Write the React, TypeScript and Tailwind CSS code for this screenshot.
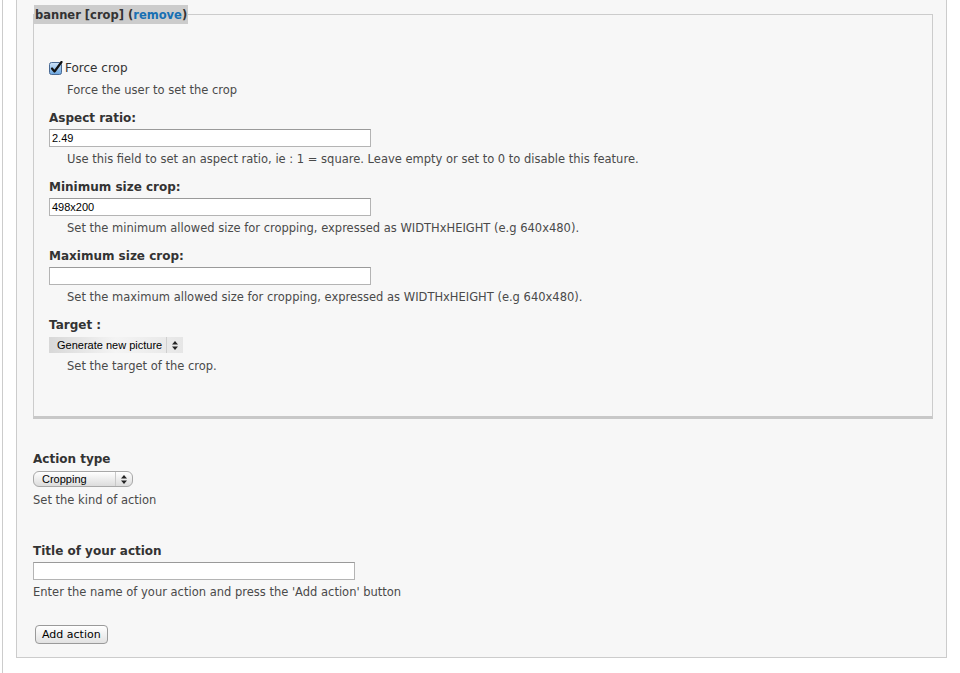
const font = "font-['DejaVu_Sans',_'Liberation_Sans',_sans-serif]";
const inputFont = "font-['Liberation_Sans',_Arial,_sans-serif]";

const Label = ({ children }: { children: React.ReactNode }) => (
  <div className="h-[18px] leading-[20px] text-[12px] font-bold text-[#333]">{children}</div>
);

const Desc = ({ children, indent = true }: { children: React.ReactNode; indent?: boolean }) => (
  <div className={`h-[18px] leading-[20px] text-[11.5px] text-[#4a4a4a] ${indent ? 'pl-[18px]' : ''}`}>
    {children}
  </div>
);

const TextInput = ({ value = '', width }: { value?: string; width: string }) => (
  <div
    className={`${width} h-[18px] bg-white border border-[#b4b4b4] border-t-[#9a9a9a] px-[2px] leading-[16px] text-[11px] text-black ${inputFont}`}
  >
    {value}
  </div>
);

const Arrows = () => (
  <svg width="6" height="9" viewBox="0 0 6 9" className="block">
    <path d="M3 0 L6 3.5 L0 3.5 Z" fill="#222" />
    <path d="M0 5.5 L6 5.5 L3 9 Z" fill="#222" />
  </svg>
);

const Checkbox = () => (
  <svg width="14" height="14" viewBox="0 0 14 14" className="block">
    <defs>
      <linearGradient id="cb" x1="0" y1="0" x2="0" y2="1">
        <stop offset="0" stopColor="#cfe3f7" />
        <stop offset="1" stopColor="#6aa5df" />
      </linearGradient>
    </defs>
    <rect x="0.5" y="1.5" width="12" height="12" rx="2" fill="url(#cb)" stroke="#4a6a94" />
    <path d="M3 7.5 L5.5 10.5 L12.5 1" fill="none" stroke="#111" strokeWidth="2.2" strokeLinecap="round" strokeLinejoin="round" />
  </svg>
);

export default function App() {
  return (
    <div className={`w-[960px] h-[673px] bg-white pl-[2px] ${font}`}>
      <div className="h-full border-l border-[#cccccc] pl-[13px]">
        <div className="w-[931px] bg-[#f7f7f7] border-x border-b border-[#cccccc] pt-[5px] pl-[16px] pb-[13px]">
          <fieldset className="w-[900px] border-x border-t border-b-[3px] border-[#cccccc] border-b-[#c8c8c8] m-0 p-0">
            <legend className="h-[19px] leading-[20px] bg-[#cccccc] pl-[1px] pr-[1px] text-[11.5px] font-bold text-[#333]">
              banner [crop] (<span className="text-[#176fb3]">remove</span>)
            </legend>
            <div className="pt-[35px] pl-[15px] pb-[42px]">
              <div className="h-[18px] flex items-center gap-[2px] text-[12px] text-[#333]">
                <Checkbox />
                <span className="leading-[20px]">Force crop</span>
              </div>
              <div className="mt-[3px]">
                <Desc>Force the user to set the crop</Desc>
              </div>

              <div className="mt-[10px]">
                <Label>Aspect ratio:</Label>
                <div className="mt-[3px]">
                  <TextInput value="2.49" width="w-[322px]" />
                </div>
                <div className="mt-[2px]">
                  <Desc>Use this field to set an aspect ratio, ie : 1 = square. Leave empty or set to 0 to disable this feature.</Desc>
                </div>
              </div>

              <div className="mt-[10px]">
                <Label>Minimum size crop:</Label>
                <div className="mt-[3px]">
                  <TextInput value="498x200" width="w-[322px]" />
                </div>
                <div className="mt-[2px]">
                  <Desc>Set the minimum allowed size for cropping, expressed as WIDTHxHEIGHT (e.g 640x480).</Desc>
                </div>
              </div>

              <div className="mt-[10px]">
                <Label>Maximum size crop:</Label>
                <div className="mt-[3px]">
                  <TextInput width="w-[322px]" />
                </div>
                <div className="mt-[2px]">
                  <Desc>Set the maximum allowed size for cropping, expressed as WIDTHxHEIGHT (e.g 640x480).</Desc>
                </div>
              </div>

              <div className="mt-[10px]">
                <Label>Target :</Label>
                <div className="mt-[4px] w-[134px] h-[16px] flex items-center bg-gradient-to-r from-[#d8d8d8] via-[#f4f4f4] to-[#e6e6e6]">
                  <span className={`flex-1 pl-[8px] text-[11px] leading-[16px] text-black ${inputFont}`}>Generate new picture</span>
                  <span className="h-full flex items-center border-l border-[#cfcfcf] px-[5px]">
                    <Arrows />
                  </span>
                </div>
                <div className="mt-[3px]">
                  <Desc>Set the target of the crop.</Desc>
                </div>
              </div>
            </div>
          </fieldset>

          <div className="mt-[30px]">
            <Label>Action type</Label>
            <div className="mt-[4px] w-[100px] h-[16px] flex items-center rounded-[6px] border border-[#a8a8a8] bg-gradient-to-b from-[#ffffff] to-[#dcdcdc]">
              <span className={`flex-1 pl-[8px] text-[11px] leading-[14px] text-black ${inputFont}`}>Cropping</span>
              <span className="h-full flex items-center border-l border-[#c8c8c8] px-[5px]">
                <Arrows />
              </span>
            </div>
            <div className="mt-[3px]">
              <Desc indent={false}>Set the kind of action</Desc>
            </div>
          </div>

          <div className="mt-[33px]">
            <Label>Title of your action</Label>
            <div className="mt-[3px]">
              <TextInput width="w-[322px]" />
            </div>
            <div className="mt-[2px]">
              <Desc indent={false}>Enter the name of your action and press the 'Add action' button</Desc>
            </div>
          </div>

          <div className="mt-[25px] pl-[2px] flex">
            <button className="h-[19px] px-[6px] rounded-[4px] border border-[#9a9a9a] bg-gradient-to-b from-[#ffffff] to-[#e2e2e2] text-[11px] leading-[17px] text-black">
              Add action
            </button>
          </div>
        </div>
      </div>
    </div>
  );
}
